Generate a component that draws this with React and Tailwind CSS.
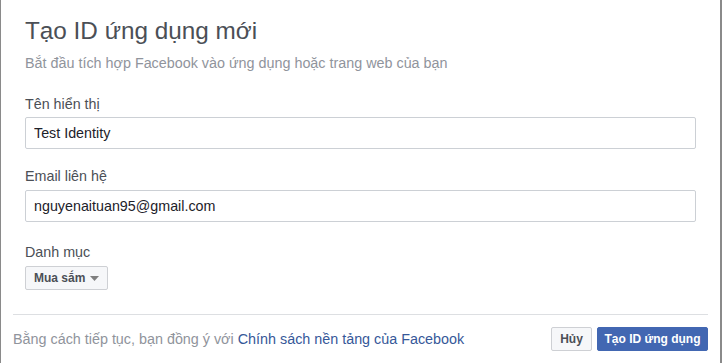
export default function App() {
  return (
    <div className="w-[722px] h-[363px] bg-white border-l border-l-[#8a8a8a] border-r-2 border-r-[#8a8a8a] font-['Liberation_Sans',Arial,sans-serif] overflow-hidden">
      <div className="pl-[24px] pr-[24px]">
        {/* Header */}
        <h1 className="pt-[17px] text-[24.3px] leading-[28px] text-[#4b4f56] font-normal">
          Tạo ID ứng dụng mới
        </h1>
        <p className="mt-[9px] text-[14.35px] leading-[18px] text-[#90949c]">
          Bắt đầu tích hợp Facebook vào ứng dụng hoặc trang web của bạn
        </p>

        {/* Display name */}
        <label className="block mt-[23px] text-[14.3px] leading-[18px] text-[#4b4f56]">
          Tên hiển thị
        </label>
        <input
          type="text"
          defaultValue="Test Identity"
          className="mt-[4px] block w-full h-[32px] px-[8px] border border-[#ccd0d5] rounded-[2px] text-[14.3px] text-[#1d2129] outline-none"
        />

        {/* Contact email */}
        <label className="block mt-[18px] text-[14.3px] leading-[18px] text-[#4b4f56]">
          Email liên hệ
        </label>
        <input
          type="text"
          defaultValue="nguyenaituan95@gmail.com"
          className="mt-[5px] block w-full h-[32px] px-[8px] border border-[#ccd0d5] rounded-[2px] text-[14.3px] text-[#1d2129] outline-none"
        />

        {/* Category */}
        <label className="block mt-[21px] text-[14.3px] leading-[18px] text-[#4b4f56]">
          Danh mục
        </label>
        <button className="mt-[5px] flex items-center gap-[5px] h-[24px] px-[8px] bg-[#f6f7f9] border border-[#ced0d4] rounded-[2px] text-[12px] font-bold text-[#4b4f56]">
          Mua sắm
          <svg width="9" height="5" viewBox="0 0 9 5">
            <path d="M0 0h9L4.5 5z" fill="#7f7f7f" />
          </svg>
        </button>
      </div>

      {/* Footer */}
      <div className="mx-[12px] mt-[24px] border-t border-[#dddfe2] pt-[12px] flex items-center justify-between">
        <p className="text-[14.35px] leading-[18px] text-[#90949c]">
          Bằng cách tiếp tục, bạn đồng ý với{' '}
          <a className="text-[#365899]">Chính sách nền tảng của Facebook</a>
        </p>
        <div className="flex gap-[5px]">
          <button className="w-[41px] h-[24px] flex items-center justify-center bg-[#f6f7f9] border border-[#ced0d4] rounded-[2px] text-[12px] font-bold text-[#4b4f56]">
            Hủy
          </button>
          <button className="w-[111px] h-[24px] flex items-center justify-center bg-[#4267b2] border border-[#4267b2] rounded-[2px] text-[12px] font-bold text-white">
            Tạo ID ứng dụng
          </button>
        </div>
      </div>
    </div>
  );
}
